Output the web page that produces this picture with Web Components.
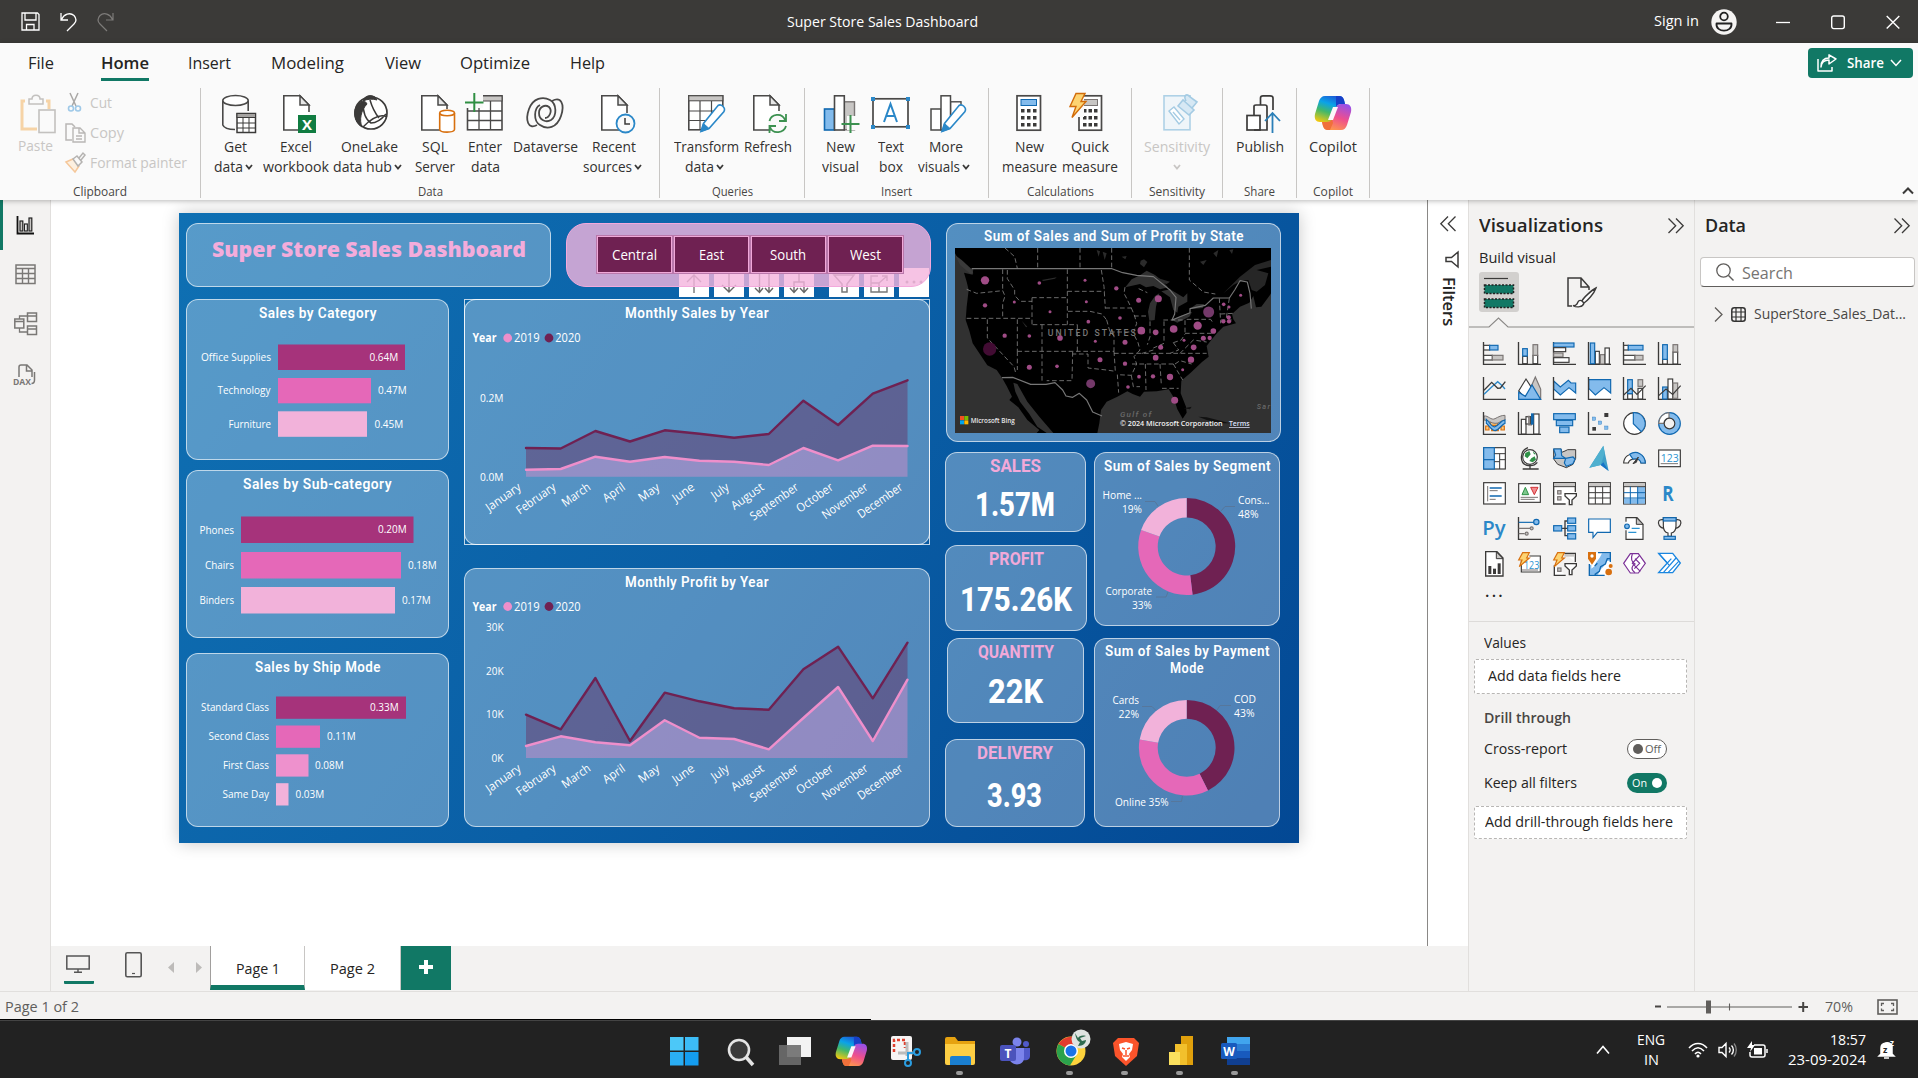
<!DOCTYPE html>
<html lang="en">
<head>
<meta charset="utf-8">
<title>Super Store Sales Dashboard</title>
<style>
html,body{margin:0;height:100%;overflow:hidden}
body{font-family:"Open Sans","Noto Sans",sans-serif;color:#252423;background:#fff}
</style>
</head>
<body>
<bi-app></bi-app>
<script>
const K='#3b3a39',BL='#83bbec',BS='#1068b0',GR='#c8c6c4',GS='#7a7574',GREEN='#117865';
const BASE='*{box-sizing:border-box}svg{display:block;overflow:visible;flex:none}';
function comp(name,css,html){
  customElements.define(name,class extends HTMLElement{
    connectedCallback(){
      if(this.shadowRoot)return;
      const t=document.createElement('template');
      t.innerHTML='<style>'+BASE+css+'</style>'+(typeof html==='function'?html(this):html);
      this.attachShadow({mode:'open'}).appendChild(t.content.cloneNode(true));
    }
  });
}
/* Text set to an exact width */
customElements.define('fit-text',class extends HTMLElement{
  connectedCallback(){
    if(this.shadowRoot)return;
    const w=+this.getAttribute('w');
    const s=this.attachShadow({mode:'open'});
    s.innerHTML='<style>:host{display:inline-block;white-space:nowrap;line-height:1.3;flex:none;width:'+w+'px;text-align:left}span{display:inline-block;transform-origin:0 50%}</style><span><slot></slot></span>';
    const sp=s.querySelector('span'),n=sp.getBoundingClientRect().width;
    if(n)sp.style.transform='scaleX('+(w/n)+')';
  }
});
const F=(t,w,st='')=>`<fit-text w="${w}" style="${st}">${t}</fit-text>`;
const T=(x1,x2,cy,s,size=11.5,ex='')=>`<text x="${x1}" y="${(cy-.4+size*.36).toFixed(1)}" font-size="${size}" textLength="${(x2-x1).toFixed(1)}" lengthAdjust="spacingAndGlyphs" ${ex}>${s}</text>`;
const R=(x,y,w,h,f='none',s='none',sw=1)=>`<rect x="${x}" y="${y}" width="${w}" height="${h}" fill="${f}" stroke="${s}" stroke-width="${sw}"/>`;
const P=(d,s=K,sw=1.5,f='none',ex='')=>`<path d="${d}" stroke="${s}" stroke-width="${sw}" fill="${f}" ${ex}/>`;
const C=(x,y,r,f='none',s='none',sw=1)=>`<circle cx="${x}" cy="${y}" r="${r}" fill="${f}" stroke="${s}" stroke-width="${sw}"/>`;
const S=(w,h,c,vb)=>`<svg width="${w}" height="${h}" viewBox="${vb||`0 0 ${w} ${h}`}">${c}</svg>`;
const copilot=(id)=>`<defs><linearGradient id="${id}a" x1=".6" y1="0" x2=".2" y2="1"><stop offset="0" stop-color="#1b5fd8"/><stop offset=".3" stop-color="#0aa3e8"/><stop offset=".6" stop-color="#42b86a"/><stop offset="1" stop-color="#f2c80f"/></linearGradient><linearGradient id="${id}b" x1=".7" y1="0" x2=".3" y2="1"><stop offset="0" stop-color="#9a50e6"/><stop offset=".5" stop-color="#ee4f8e"/><stop offset="1" stop-color="#ff9a4a"/></linearGradient></defs>
<path d="M11 1H25c3 0 4 1.500 5 4l1 4h-4c-3 0-4 2-5 5l-3 9c-1 3-2 4-5 4H6c-4 0-6-3-5-8L5 6c1-3 3-5 6-5z" fill="url(#${id}a)"/>
<path d="M22 1h3c3 0 4 1.500 5 4l1 4h-4c-3 0-4 1-5 3z" fill="#1740c8"/>
<path d="M27 35H14c-3 0-4-1.500-5-4l-1-4h5c3 0 4-1 5-4l4-10c1-3 2-4 5-4h5c4 0 6 3 5 8l-4 13c-1 3-3 5-6 5z" fill="url(#${id}b)"/>
<path d="M8 27h5c3 0 4-1 5-4l1 5-3 7h-2c-3 0-4-1.500-5-4z" fill="#f0703a"/>
<path d="M19 12h5l-5 13h-5z" fill="#fdf6fa"/>`;

/* ---------- title bar ---------- */
comp('title-bar',`:host{display:grid;grid-template-columns:1fr auto 1fr;align-items:center;height:43px;background:#3b3a38;color:#fff;font-size:14.5px}
.l{display:flex;gap:20px;padding-left:21px;align-items:center}.r{display:flex;justify-content:flex-end;align-items:center;padding-right:18px}`,
`<div class="l">${S(19,19,P('M1 1H16.500L18 2.500V18H1zM4 1V8H15V1M5.500 18V12.500H13V18','#fff',1.3))}
${S(17,19,P('M1 1V8H8M1.500 7.500C4 2 10 0 14 3.500C17 7 16 10 14 12L7 19','#fff',1.3))}
${S(17,19,P('M16 1V8H9M15.500 7.500C13 2 7 0 3 3.500C0 7 1 10 3 12L10 19','#7d7b79',1.2))}</div>
<div style="padding-right:154px">${F('Super Store Sales Dashboard',191)}</div>
<div class="r">${F('Sign in',45)}<span style="margin-left:12px">${S(26,26,C(13,13,12.7,'#f5f4f3')+C(13,7.5,3.8,'none','#222',1.8)+P('M5.500 14.500H20.500C21.500 24 4.500 24 5.500 14.500Z','#222',1.8,'none','stroke-linejoin="round"'))}</span>
<span style="margin-left:39px">${S(14,14,P('M0 7.500H14','#fff',1.3))}</span><span style="margin-left:41px">${S(14,14,'<rect x=".7" y="1" width="12.600" height="12.600" rx="2" fill="none" stroke="#fff" stroke-width="1.400"/>')}</span><span style="margin-left:41px">${S(14,14,P('M.7 1L13.300 13.600M13.300 1L.7 13.600','#fff',1.4))}</span></div>`);

/* ---------- ribbon ---------- */
comp('ribbon-tabs',`:host{display:flex;height:42px;align-items:flex-start;padding:5px 5px 0 28px;font-size:16px;color:#252423}
.t{height:33px;padding-top:4px}.on{font-weight:600;border-bottom:3px solid ${GREEN}}
.sh{margin-left:auto;height:30px;width:105px;background:${GREEN};border-radius:4px;display:flex;align-items:center;color:#fff;font-size:14.500px;font-weight:600;padding-left:9px;gap:6px}`,
()=>{let x=28,o='';for(const [n,a,b] of [['File',28,54],['Home',101,149],['Insert',188,231],['Modeling',271,344],['View',385,421],['Optimize',460,530],['Help',570,605]]){o+=`<div class="t ${n=='Home'?'on':''}" style="margin-left:${a-x}px">${F(n,b-a)}</div>`;x=b}
return o+`<div class="sh">${S(20,18,P('M1 5V17H15V13M4 13C4.500 8 8 6 12 6V10L19 5L12 .8V4C7 4 4 7 4 13Z','#fff',1.5,'none','stroke-linejoin="round"'))}${F('Share',37,'margin-left:4px')}${S(12,8,P('M1 1L6 6.500L11 1','#fff',1.5))}</div>`});

const docf=(x,y2=20)=>P(`M${x+20} 38H${x+.8}V3.800H${x+17}L${x+26} 13V${y2}`,'#4a4948',1.6,'#fff')+P(`M${x+17} 3.800V13H${x+26}Z`,'#4a4948',1.5,'#e6e6e6');
const pencil=(x,y)=>P(`M${x} ${y}L${x+2.5} ${y-8}L${x+17} ${y-26}C${x+20} ${y-28} ${x+25} ${y-24} ${x+23} ${y-20}L${x+8} ${y-3}Z`,'#2b88c8',1.6,'#fff')+P(`M${x} ${y}L${x+2.500} ${y-8}L${x+8} ${y-3}Z`,'#2b88c8',1,'#2b88c8');
const calc=(x,w,c,s)=>R(x,3.8,w,34.4,'#fff','#4a4948',1.7)+R(x+4,7.500,w-8,6,c,s,1)+[0,1,2].map(j=>[0,1,2].map(i=>R(x+4+i*(w-11.500)/2,17+j*7,3.5,3.5,K)).join('')).join('');
const bolt=(x,y,k=1)=>`<g transform="translate(${x} ${y}) scale(${k})">${P('M6 0H15L11 8H16L2 24L6 13H0Z','#d26c0a',1.4,'#fdd472')}</g>`;
const IC={
get:P('M7.800 9V33C9 36 14 37.500 20 37.500M33.200 9V19','#4a4948',1.6)+`<ellipse cx="20.500" cy="8.500" rx="12.700" ry="5" fill="#fff" stroke="#4a4948" stroke-width="1.600"/>`+R(22,21.500,18.500,19,'#fff','#3b3a39',1.5)+R(22,21.500,18.500,4,'#a5a3a1','#3b3a39',1)+P('M28 25V40M34 25V40M22 31H40M22 36H40','#3b3a39',1),
excel:docf(7)+R(22,23,18,18,'#107c41')+`<text x="31" y="37.500" font-size="15" font-weight="700" fill="#fff" text-anchor="middle" textLength="9">X</text>`,
lake:C(22,21,16,'#fff','#3b3a39',1.7)+P('M9 12C4 17 4 30 13 35C10 28 12 18 18 12C16 8 13 8 9 12Z',K,1,K)+P('M14 9C16 2 26 2 28 8C24 6.500 18 7 14 9Z',K,1,K)+P('M14 10C14 20 17 28 22 31C26 31 32 28 37 22M21 8C23 15 26 21 30 26M14 35C24 25 32 22 38 25',K,1.500),
sql:docf(6,17)+P('M24.700 21V37.500C25 41 39 41 39.500 37.500V21','#d8700f',1.6,'#fff')+`<ellipse cx="32.100" cy="21" rx="7.400" ry="2.800" fill="#fff" stroke="#d8700f" stroke-width="1.600"/>`,
enter:R(2.5,3.800,34.500,34,'#fff','#4a4948',1.6)+R(14,4,23,5,GR,'#4a4948',1)+P('M14 9V38M25.500 9V38M2.500 19H37M2.500 28.500H37','#4a4948',1.300)+R(0,2,18,14,'#fafafa')+P('M0 10.500H18.500M9.300 1V20','#2f8f43',2),
dv:P('M12 33C3 38 0 28 4 17C8 6 18 4 25 8C32 12 32 24 26 28C21 31 14 28 14 21C14 15 20 12 24 15C28 19 24 26 20 26','#4a4948',1.800)+P('M27 9C36 4 40 12 36 24C32 36 22 38 15 33C8 29 9 16 15 13','#4a4948',1.800),
recent:docf(7,21)+C(31.500,31.500,9,'#fafafa','#2b88c8',1.800)+P('M31 26V32H36',K,1.500),
trans:R(2.800,3.800,34,34,'#fff','#4a4948',1.600)+R(2.800,3.800,34,5,GR,'#4a4948',1)+P('M14 9V38M25.500 9V38M3 19H37M3 28.500H37','#4a4948',1.200)+P('M16 40L39 14V42H16Z','none',0,'#fafafa')+pencil(15,39.500),
refresh:docf(5,19)+C(29.700,31.500,10,'#fafafa')+P('M21.500 29C23 22 34 20 37 28M38 22V29H31M38 34C36 41 25 43 22 35M21.500 41V34H28','#3c9150',1.800),
nv:R(4.500,17,10,21,BL,BS,1.600)+R(24,9.800,10.500,28,GR,GS,1.400)+R(14.500,3.800,9.800,34.200,'#fff','#4a4948',1.600)+P('M27 24H38V38H27Z','none',0,'#fafafa')+P('M21.500 32H39.500M30.500 23V41','#3c9150',2),
tb:R(2,6.800,35,28,'#fff','#4a4948',1.700)+[[0,5],[35,5],[0,33],[35,33]].map(p=>R(p[0],p[1],4,4,'#2b88c8')).join('')+P('M13 30L19.500 12L26 30M15.500 24H23.500','#2b88c8',2),
mv:R(5,17,10,21,'#fff','#4a4948',1.500)+R(24.500,9.800,10.500,28,'#fff','#4a4948',1.400)+R(15,3.800,9.500,34.200,'#fff','#4a4948',1.500)+P('M17 41L38 14V40H16Z','none',0,'#fafafa')+pencil(16,39.500),
calc:calc(8,23.500,'#83bbec','#1068b0'),
quick:calc(9,22.500,GR,GS)+R(5,3,9,22,'#fafafa')+bolt(0,1.500),
sens:R(7,3.800,26,34,'#eff5f9','#aed1e6',1.600)+P('M12 19L17 15L27 27L22 32Z','#a4cbe3',1.400,'#fff')+P('M16 20L23 28','#a4cbe3',1.400)+P('M21 14L26 8L37 18L32 23ZM29 9C26 3 30 1 33 5L40 10L35 16','#a4cbe3',1.600,'#d6e8f4'),
pub:R(7,23.500,13,14.500,'#fff',K,1.700)+P('M14 23V14.500Q14 13 16 13H25Q27 13 27 15V38H14','#3b3a39',1.700)+P('M20.500 13V6Q20.500 3.800 23 3.800H30Q33 3.800 33 6V18',K,1.700)+R(28,22,10,19,'#fafafa')+P('M32.500 41V21M25 29L32.500 21L40 29','#2b7fb8',1.800),
cop:`<g transform="translate(1 3)">${copilot('r')}</g>`};
const chev=(c=K)=>S(8,6,P('M1 1L4 4.500L7 1',c,1.800));
comp('ribbon-item',`:host{display:flex;flex-direction:column;align-items:center;padding-top:4px;color:#323130;font-size:14px;flex:none}
.l{display:flex;align-items:center;gap:2px;height:20px}.i{height:42px;margin-bottom:3px}`,
e=>{const dis=e.hasAttribute('disabled');e.style.width=e.getAttribute('w')+'px';
return `<div class="i">${S(40,42,IC[e.getAttribute('icon')])}</div>`+e.getAttribute('lines').split('|').map(l=>{const [t,w]=l.split(':');return `<div class="l" style="${dis?'color:#c8c6c4':''}">${t=='v'?chev('#c8c6c4'):t.endsWith('^')?F(t.slice(0,-1),w)+chev()+'<span style="width:2px"></span>':F(t,w)}</div>`}).join('')});
comp('ribbon-group',`:host{display:flex;flex-direction:column;height:110px;border-right:1px solid #c8c6c4;flex:none;font-size:12px;color:#484644}
.b{display:flex;flex:1}.f{display:flex;justify-content:center;height:14px}`,
e=>{e.style.width=e.getAttribute('w')+'px';return `<div class="b" style="padding-left:${e.getAttribute('pad')||0}px"><slot></slot></div><div class="f">${F(e.getAttribute('label'),e.getAttribute('lw'))}</div>`});
comp('clip-tools',`:host{display:flex;flex:1;color:#c8c6c4;font-size:14px;padding-left:18px}
.p{display:flex;flex-direction:column;align-items:center;width:34px;padding-top:7px}.c{padding:0 0 0 13px}.r{height:30px;display:flex;align-items:center}.r span{width:25px;display:flex}`,
`<div class="p"><div style="margin-left:5px">${S(36,39,P('M5 6H2V34H17M26 6H29V14','#f6d3a6',3)+P('M9 9V4H12C12 -1 20 -1 20 4H23V9Z','#c3c1bf',1.500,'#fafafa')+R(19,15,16,22.500,'#fafafa','#c3c1bf',1.600))}</div><div style="margin-top:2px">${F('Paste',35)}</div></div>
<div class="c"><div class="r"><span>${S(16,20,P('M5 0L11 13M13 0L7 13','#a9a7a5',1.500)+C(6,15.500,2.500,'none','#9fc9e8',1.600)+C(13,15.500,2.500,'none','#9fc9e8',1.600))}</span>${F('Cut',22)}</div>
<div class="r"><span>${S(21,20,P('M7 17H1V1H7L10 4','#b9b7b5',1.500)+P('M8 5H15L20 10V19H8ZM14 5V10H20M11 13H17M11 16H17','#b9b7b5',1.400,'#fafafa'))}</span>${F('Copy',34)}</div>
<div class="r"><span>${S(21,20,P('M1 9L8 6L14 13L10 19Z','#f5c79a',1.500,'#fdf0e0')+P('M8 6L12 3L17 9L13 13ZM14 5L18 0L20 2L16 7','#b5b3b1',1.500,'#fafafa'))}</span>${F('Format painter',97)}</div></div>`);
const ri=(i,w,l,x='')=>`<ribbon-item icon="${i}" w="${w}" lines="${l}" ${x}></ribbon-item>`;
comp('ribbon-bar',`:host{display:block;height:157px;background:#fafafa;box-shadow:0 1px 5px rgba(0,0,0,.28);z-index:5;position:relative;flex:none}
.g{display:flex;padding-top:3px}.x{margin-left:auto;padding:99px 4px 0 0}`,
`<ribbon-tabs></ribbon-tabs><div class="g">
<ribbon-group w="201" label="Clipboard" lw="54"><clip-tools></clip-tools></ribbon-group>
<ribbon-group w="459" pad="4" label="Data" lw="25">${ri('get',60,'Get:23|data^:29')+ri('excel',62,'Excel:32|workbook:66')+ri('lake',84,'OneLake:57|data hub^:59')+ri('sql',48,'SQL:26|Server:40')+ri('enter',52,'Enter:34|data:29')+ri('dv',68,'Dataverse:65')+ri('recent',70,'Recent:44|sources^:49')}</ribbon-group>
<ribbon-group w="145" pad="10" label="Queries" lw="41">${ri('trans',72,'Transform:65|data^:29')+ri('refresh',52,'Refresh:48')}</ribbon-group>
<ribbon-group w="184" pad="10" label="Insert" lw="31">${ri('nv',50,'New:29|visual:37')+ri('tb',52,'Text:26|box:24')+ri('mv',58,'More:34|visuals^:42')}</ribbon-group>
<ribbon-group w="143" pad="11" label="Calculations" lw="67">${ri('calc',58,'New:29|measure:55')+ri('quick',64,'Quick:38|measure:56')}</ribbon-group>
<ribbon-group w="91" label="Sensitivity" lw="56">${ri('sens',90,'Sensitivity:66|v:0','disabled')}</ribbon-group>
<ribbon-group w="74" label="Share" lw="31">${ri('pub',73,'Publish:48')}</ribbon-group>
<ribbon-group w="73" label="Copilot" lw="40">${ri('cop',72,'Copilot:48')}</ribbon-group>
<div class="x">${S(12,8,P('M1 6.500L6 1.500L11 6.500',K,2))}</div></div>`);

/* ---------- left rail ---------- */
comp('nav-rail',`:host{display:flex;flex-direction:column;width:51px;background:#f3f2f1;border-right:1px solid #e1dfdd;flex:none}
div{height:49px;display:flex;align-items:center;padding-left:14px}.on{height:50px;border-left:3px solid ${GREEN};padding-left:13px}`,
`<div class="on">${S(19,19,P('M1.500 0V17.500H18',"#111",1.800)+R(4,5,2.800,10,'#c8c6c4','#222',1.200)+R(8.500,8,2.800,7,'#fff','#222',1.200)+R(13,2,2.800,13,'#c8c6c4','#222',1.200))}</div>
<div>${S(22,21,R(2,1,19,18.500,'none','#7a7876',1.500)+P('M2 4.500H21M2 9.500H21M2 14.500H21M8.500 4.500V20M14.500 4.500V20','#7a7876',1.400))}</div>
<div>${S(23,24,R(.8,7,9,9,'none','#7a7876',1.500)+R(13.500,1,9,8.500,'none','#7a7876',1.500)+R(13.500,14,9,8.500,'none','#7a7876',1.500)+P('M5.500 7V4H13.500M5.500 16V20H13.500M.8 9.500H10M13.500 4H22.500M13.500 17H22.500','#7a7876',1.300))}</div>
<div style="height:54px">${S(22,22,P('M5 13V3Q5 1 7 1H13L18 6V13M12.500 1V7H18M20.500 8V16Q20.500 19.500 17.500 19.500','#7a7876',1.500)+`<text x="-1" y="21" font-size="9" font-weight="700" fill="#7a7876" textLength="18" lengthAdjust="spacingAndGlyphs">DAX</text>`)}</div>`);

/* ---------- report visuals ---------- */
const W='fill="#fff"';
comp('visual-card',`:host{display:block;flex:none;background:rgba(255,255,255,.3);border:1px solid rgba(255,255,255,.62);border-radius:12px;color:#fff;position:relative}
header{display:flex;flex-direction:column;align-items:center;justify-content:center;font:600 14.200px/17px Roboto,sans-serif;letter-spacing:.5px;padding-top:1px}
svg{font-family:"Open Sans",sans-serif}`,
e=>{const a=n=>e.getAttribute(n);e.style.width=a('w')+'px';e.style.height=a('h')+'px';
const ls=a('head')?a('head').split('|'):[];
return (ls.length?`<header style="height:${a('hh')||25}px;${a('hh')=='43'?'padding:0 0 2px':''}">${ls.map(l=>{const [t,w]=l.split(':');return F(t,w,'line-height:17px')}).join('')}</header>`:'')+'<slot></slot>'});
comp('bar-visual',`:host{display:block}svg{font-family:"Open Sans",sans-serif}`,e=>{
const D={cat:['187 325 261 134',278,[['Office Supplies',201,271,344.500,25.500,405,'#a6337b','0.64M',369.500],['Technology',217.500,270.500,378,25.300,371,'#e568b8','0.47M',378],['Furniture',228.500,271,411.300,25.500,367,'#f2b2da','0.45M',374.500]]],
sub:['187 496 261 141',241,[['Phones',199.500,234,516.500,26.500,413.500,'#a6337b','0.20M',378],['Chairs',205,234,552,26.500,401,'#e568b8','0.18M',408],['Binders',199.500,234,587,26.500,395,'#f2b2da','0.17M',402]]],
ship:['187 679 261 147',276,[['Standard Class',201,269,696.500,22.300,406,'#a6337b','0.33M',370],['Second Class',208.500,269,725.500,22.300,320,'#e568b8','0.11M',327],['First Class',223,269,754.300,22.300,308.500,'#ee91cd','0.08M',315],['Same Day',222.500,269,783.200,22.300,288.500,'#f2b2da','0.03M',295.500]]]}[e.getAttribute('data')];
const [,,w,h]=D[0].split(' ');
return S(w,h,D[2].map(b=>R(D[1],b[3],b[5]-D[1],b[4],b[6])+T(b[1],b[2],b[3]+b[4]/2,b[0],11.5,W)+T(b[8],b[8]+28.700,b[3]+b[4]/2-.2,b[7],11.5,W)).join(''),D[0])});
const MON=[['January',40],['February',45],['March',32],['April',24],['May',23],['June',24],['July',19],['August',37],['September',56],['October',42],['November',53],['December',52]];
comp('area-visual',`:host{display:block}svg{font-family:"Open Sans",sans-serif}`,e=>{
const D={sales:['465 325 464 219',476.700,338.500,[['0.2M',480,503.500,398],['0.0M',480,503.500,477]],[448,448.500,431,441.500,430.300,433.700,437.700,434,400.700,425,393.700,380.300],[469.700,469,456.700,461.700,457,460.700,461.700,465,448,460.300,445.700,446]],
profit:['465 594 464 232',758,607,[['30K',486,503.500,627],['20K',486,503.500,671],['10K',486,503.500,714.300],['0K',491.500,503.500,758.300]],[714.700,729.300,678,741,692.700,701.300,708.300,709.700,669.300,646.700,698.300,642.700],[746,736.300,742.300,745.300,720.300,737.700,739,749.300,718,687,741,679.700]]}[e.getAttribute('data')];
const X=i=>(526+i*34.68).toFixed(1),pt=a=>a.map((y,i)=>X(i)+' '+y).join('L'),back=a=>a.map((y,i)=>X(i)+' '+y).reverse().join('L');
const [,,w,h]=D[0].split(' '),ly=D[2];
return S(w,h,T(472.500,496.500,ly,'Year',12,W+' font-weight="700"')+C(507.700,ly-.5,4.400,'#ee8fcb')+T(514,539.700,ly,'2019',12,W)+C(549,ly-.5,4.400,'#6f2152')+T(555.300,580.500,ly,'2020',12,W)
+D[3].map(l=>T(l[1],l[2],l[3],l[0],11.5,W)).join('')
+P(`M${pt(D[4])}L${back(D[5])}Z`,'none',0,'rgba(111,33,82,.4)')+P(`M${pt(D[5])}L${X(11)} ${D[1]}L526 ${D[1]}Z`,'none',0,'rgba(240,139,203,.4)')
+P('M'+pt(D[4]),'#6f2152',2.400,'none','stroke-linejoin="round" stroke-linecap="round"')+P('M'+pt(D[5]),'#ee8fcb',2.400,'none','stroke-linejoin="round" stroke-linecap="round"')
+MON.map((m,i)=>`<text transform="translate(${(+X(i)-4).toFixed(1)} ${D[1]+12.300}) rotate(-35)" x="${-m[1]}" y="0" font-size="12" textLength="${m[1]}" lengthAdjust="spacingAndGlyphs" fill="#fff">${m[0]}</text>`).join(''),D[0])});
comp('donut-visual',`:host{display:block}svg{font-family:"Open Sans",sans-serif}`,e=>{
const seg=e.getAttribute('data')=='seg',cx=1186.700,cy=seg?546.500:747.700,Ro=seg?48.500:47.800,Ri=29;
const q=(r,a)=>{a=a*Math.PI/180;return (cx+r*Math.sin(a)).toFixed(2)+' '+(cy-r*Math.cos(a)).toFixed(2)};
const arc=(a,b,f)=>P(`M${q(Ro,a)}A${Ro} ${Ro} 0 ${b-a>180?1:0} 1 ${q(Ro,b)}L${q(Ri,b)}A${Ri} ${Ri} 0 ${b-a>180?1:0} 0 ${q(Ri,a)}Z`,'none',0,f);
const [a,b]=seg?[173,290]:[153.500,280];
const lab=seg?T(1102.500,1142,495,'Home ...',11.5,W)+T(1122,1142,509.500,'19%',11.5,W)+T(1238,1269.500,500.500,'Cons...',11.5,W)+T(1238,1258.500,514.500,'48%',11.5,W)+T(1105.500,1152,591.500,'Corporate',11.5,W)+T(1132,1152,605.500,'33%',11.5,W)+P('M1145 501.500H1155L1158 506M1235 506.500H1225L1221 511M1156 597H1166L1168 592','#56779c',1)
:T(1112.500,1139,700.500,'Cards',11.5,W)+T(1118.500,1139,714.500,'22%',11.5,W)+T(1234,1256,699.500,'COD',11.5,W)+T(1234,1254.500,713.500,'43%',11.5,W)+T(1115,1168.500,802.300,'Online 35%',11.5,W)+P('M1142 706.500H1152L1156 710.500M1231 705.500H1220L1217 710M1171 801.500H1181.500L1182.500 796','#56779c',1);
return S(184,seg?147:144,arc(0,a,'#6f2152')+arc(a,b,'#e568b8')+arc(b,360,'#f2b2da')+lab,seg?'1095 478 184 147':'1095 682 184 144')});
comp('kpi-card',`:host{display:flex;flex-direction:column;align-items:center;flex:none;background:rgba(255,255,255,.3);border:1px solid rgba(255,255,255,.62);border-radius:12px;font-family:Roboto,sans-serif;color:#fff}
.a{color:#f2a9d9;font-weight:700;font-size:17.500px;height:26px;display:flex;align-items:center}.b{font-weight:800;font-size:33px;flex:1;display:flex;align-items:center;margin-left:-1px}`,
e=>{const a=n=>e.getAttribute(n);return `<div class="a">${F(a('label'),a('lw'))}</div><div class="b" style="padding-bottom:${a('pb')||0}px">${F(a('value'),a('vw'),'line-height:1')}</div>`});
comp('slicer-tiles',`:host{display:flex;justify-content:center;gap:2px;width:365px;height:64px;padding:12px 0 0 2px;background:rgba(244,180,221,.8);border:1.500px solid #f3a9dc;border-radius:20px;position:relative;z-index:3;font-size:14px;color:#fff}
div{width:75px;height:37px;background:#6f2152;border:1px solid #f0a8d8;outline:1px solid #b978ab;outline-offset:0;display:flex;align-items:center;justify-content:center;padding-top:1px}`,
`<div>${F('Central',45)}</div><div>${F('East',25)}</div><div>${F('South',36)}</div><div>${F('West',31)}</div>`);
const hb=c=>S(30,29,R(0,0,30,29,'#fff')+c);
comp('visual-tools',`:host{display:flex;position:absolute;right:1px;top:-31px;z-index:1;gap:5px}`,
[P('M15 25V7M8 14L15 7L22 14','#777',1.400),P('M15 6V24M8 17L15 24L22 17','#666',1.400),P('M10.500 6V24M6 20L10.500 24.500L14 20M20 6V24M16 20L20 24.500L24 20','#666',1.400),P('M15 6V14M10 24V14H20V24M6 20L10 24.500L14 20M16 20L20 24.500L24 20','#666',1.400)].map(hb).join('')+'<span style="width:5px"></span>'+
[P('M5 7H25L18 16V24H13V16Z','#777',1.500),P('M7 14V24H23V18M7 14V8H14M7 15H15V24M15 15L23 8M18 8H23V13','#777',1.400),C(8,14,1.500,'#888')+C(15,14,1.500,'#888')+C(22,14,1.500,'#888')].map(hb).join(''));

/* Map geometry is in a 948x555 space, three units to the pixel */
comp('map-visual',`:host{display:block;padding:0 9px 0 8px}svg{overflow:hidden}`,()=>{
const sea='#313131',dots=[[135,211,13],[135,286,7],[223,276,5],[298,219,6],[330,305,5],[194,377,7],[268,378,6],[268,472,8],[351,469,6],[360,384,9],[435,211,5],[439,275,5],[445,335,6],[466,394,5],[480,449,8],[452,521,14],[529,235,7],[540,324,6],[555,397,8],[555,461,7],[564,531,6],[596,271,8],[655,266,11],[604,362,12],[647,367,9],[701,357,12],[662,412,8],[647,443,9],[597,500,6],[639,499,7],[690,501,10],[704,571,11],[728,479,5],[753,449,10],[761,412,9],[732,391,5],[773,347,13],[806,306,17],[820,363,9],[790,385,8],[809,384,7],[850,334,7],[866,322,7],[867,334,7],[851,283,6],[867,291,5],[902,256,5]];
return S(316,185,R(45,114,948,555,'#000')
+P('M45 130L62 158L85 178L100 176L98 194L72 188L80 215L86 240L80 290L77 330L88 362L98 400L125 440L142 466L170 480L186 503L200 528L216 560L208 570L235 592L262 630L298 660L290 669H45Z','none',0,sea)
+P('M220 518L232 522L262 575L298 620L340 669H320L292 650L268 612L240 575L226 545Z','none',0,sea)
+P('M483 600L500 575L532 560L562 544L578 552L600 560L612 545L650 544L686 538L700 560L712 598L728 626L740 608L738 590L722 550L724 512L752 488L786 456L806 440L800 408L812 392L832 368L850 350L888 340L880 328L876 312L900 290L928 278L940 258L948 292L964 290L990 255L993 250V669H472L478 640Z','none',0,sea)
+P('M850 250L900 200L945 165L993 150V170L950 180L985 190L975 225L950 245L935 240L925 210L905 212L880 225Z','none',0,'#262626')
+P('M45 135L65 150L92 175L100 190L92 192L60 165Z','none',0,'#3a3a3a')
+P('M556 232L575 208L600 196L620 182L645 195L664 210L684 232L660 238L640 228L618 232L600 222Z','none',0,sea)+P('M630 280L645 258L658 250L648 290L644 330L628 332L624 305Z','none',0,sea)+P('M664 244L690 238L730 262L742 250L742 275L715 290L712 308L700 300L690 262Z','none',0,sea)+P('M696 330L720 318L756 306L748 320L712 338Z','none',0,sea)+P('M748 298L770 282L792 282L788 294Z','none',0,sea)
+P('M602 152L612 148L622 156L612 172L600 162ZM470 120L480 124L476 140ZM488 125L500 130L494 150ZM545 140L560 138L556 148ZM640 200L690 215L680 222L650 214ZM780 155L800 150L790 165ZM820 130L835 120L830 142ZM868 120L880 118L876 132ZM245 332L262 350L258 352ZM305 210L350 202L345 206L310 213Z','none',0,'#2b2b2b')
+P('M730 595L755 590L750 598ZM775 620L800 622L870 640L840 640L800 630Z','none',0,'#111')
+P('M95 176H516L548 188L590 196L640 200L690 240L708 262L704 312L696 330L750 308L750 296L796 286L820 264H868L884 240L900 212L922 216L930 250L934 296','#777',3.400,'none','stroke-linejoin="round"')
+P('M186 503L218 502L272 523H318L345 518L368 540L378 558L398 562L418 550L440 570L458 606L486 618','#777',3.600,'none','stroke-linejoin="round"')
+P('M188 178V240M80 238L110 250L188 242L195 258L188 280V325M80 325H276M142 328V384L222 470L228 492M232 328V424M232 424H522M306 344V514M202 180V206L224 240V256L240 274H276M276 263V344M276 263H382M382 178V344M278 344H412M382 244H494M384 304H450L486 312L500 330M412 344V424M484 180L492 230L496 296M496 294H574L560 265L552 250L556 225M500 330L510 366L522 378V424M522 424L526 484L500 480L444 474V432H398M398 426L396 512H320M232 424V480M510 366H575M574 294L584 318L590 340L580 370L594 398L600 420L582 440L590 462L574 496L532 494L536 548M522 430H590M574 496L580 530H600M582 318H626M630 334V380L622 404M590 430H800M576 462H705M672 334V400L640 414M670 330H735V370M735 370H815M700 398L724 390L735 372M740 328H812L820 340M616 462L618 540M660 462L664 525M666 535H716M700 462L728 510M705 462L720 452L755 462M640 420L600 432M700 398L716 420L690 430M720 430L760 390L800 396M596 236L622 248M838 265L842 340M868 265L858 330M842 312L880 310M842 330L875 330M293 114V175M420 114V175M515 114V178M195 114L224 140L232 175M748 114V210L790 246L826 252','#858585',2.400,'none','stroke-dasharray="14 8"')
+`<text x="323" y="377" font-family="Roboto,sans-serif" font-size="26" font-weight="500" fill="#777" textLength="264">UNITED STATES</text><text x="540" y="620" font-family="Roboto,sans-serif" font-style="italic" font-size="24" font-weight="500" fill="#6a6a6a" textLength="94">Gulf of</text><text x="950" y="597" font-family="Roboto,sans-serif" font-style="italic" font-size="22" font-weight="500" fill="#6a6a6a" textLength="40">Sar</text><text x="364" y="683" font-family="Roboto,sans-serif" font-size="24" font-weight="500" fill="#777" textLength="98">MEXICO</text>`
+dots.map(d=>C(d[0],d[1],d[2]-.5,d[2]>13?'#74396a':'#a04c86')).join('')+C(149,417,20,'#420c33')
+R(60,618,12,12,'#f25022')+R(73,618,12,12,'#7fba00')+R(60,631,12,12,'#00a4ef')+R(73,631,12,12,'#ffb900')
+`<text x="92" y="639" font-family="Open Sans,sans-serif" font-size="22" font-weight="600" fill="#e8e8e8" textLength="132" lengthAdjust="spacingAndGlyphs">Microsoft Bing</text><text x="540" y="648" font-family="Open Sans,sans-serif" font-size="23" font-weight="600" fill="#f2f2f2" textLength="308" lengthAdjust="spacingAndGlyphs">© 2024 Microsoft Corporation</text><text x="867" y="648" font-family="Open Sans,sans-serif" font-size="23" font-weight="600" fill="#dfe4ff" textLength="62" lengthAdjust="spacingAndGlyphs" text-decoration="underline">Terms</text>`,'45 114 948 555')});

comp('report-page',`:host{display:flex;gap:14px;width:1120px;height:630px;padding:10px 0 0 7px;background:linear-gradient(125deg,#0f70b3 0%,#0a5fa6 50%,#034894 100%);box-shadow:0 0 16px rgba(0,0,0,.22)}
.left{display:flex;flex-direction:column;gap:12px;width:745px;flex:none}.row{display:flex}.col{display:flex;flex-direction:column}
.title{display:flex;align-items:center;padding-left:25px;height:50px;font-weight:800;font-size:21.500px;color:#f4acdb}
.sel{outline:1px solid rgba(255,255,255,.75);outline-offset:-1px;width:466px;height:246px;position:relative}`,
`<div class="left"><div class="row" style="gap:15px"><visual-card w="365" h="64"><div class="title">${F('Super Store Sales Dashboard',314)}</div></visual-card><slicer-tiles></slicer-tiles></div>
<div class="row" style="gap:15px"><div class="col">
<visual-card w="263" h="161" head="Sales by Category:118"><bar-visual data="cat"></bar-visual></visual-card>
<visual-card style="margin-top:10px" w="263" h="168" head="Sales by Sub-category:149"><bar-visual data="sub"></bar-visual></visual-card>
<visual-card style="margin-top:15px" w="263" h="174" head="Sales by Ship Mode:126"><bar-visual data="ship"></bar-visual></visual-card></div>
<div class="col" style="gap:23px"><div class="sel"><visual-tools></visual-tools><visual-card w="466" h="246" head="Monthly Sales by Year:144"><area-visual data="sales"></area-visual></visual-card></div>
<visual-card w="466" h="259" head="Monthly Profit by Year:144"><area-visual data="profit"></area-visual></visual-card></div></div></div>
<div class="col" style="gap:10px"><visual-card style="margin-left:1px" w="335" h="219" hh="24" head="Sum of Sales and Sum of Profit by State:260"><map-visual></map-visual></visual-card>
<div class="row" style="gap:7px"><div class="col" style="width:142px">
<kpi-card style="width:141px;height:80px" label="SALES" lw="51" value="1.57M" vw="80" pb="2"></kpi-card>
<kpi-card style="width:142px;height:86px;margin-top:13px" label="PROFIT" lw="55" value="175.26K" vw="112" pb="3"></kpi-card>
<kpi-card style="width:137px;height:85px;margin:7px 0 0 2px" label="QUANTITY" lw="76" value="22K" vw="55" pb="4"></kpi-card>
<kpi-card style="width:140px;height:88px;margin-top:16px" label="DELIVERY" lw="76" value="3.93" vw="55" pb="2"></kpi-card></div>
<div class="col" style="gap:12px"><visual-card w="186" h="174" head="Sum of Sales by Segment:167"><donut-visual data="seg"></donut-visual></visual-card>
<visual-card w="186" h="189" hh="43" head="Sum of Sales by Payment:165|Mode:34"><donut-visual data="pay"></donut-visual></visual-card></div></div></div>`);

/* ---------- side panes ---------- */
const dbl=(l)=>S(16,16,l?P('M8 .500L.8 7.700L8 15M15.500 .500L8.300 7.700L15.500 15',K,1.300):P('M.5 .500L7.700 7.700L.5 15M8 .500L15.200 7.700L8 15',K,1.300));
comp('filters-pane',`:host{display:flex;flex-direction:column;align-items:center;width:41px;border-left:1px solid #8a8886;background:#fff;padding:16px 0 0 0;flex:none}
.t{writing-mode:vertical-rl;font-size:16.500px;font-weight:600;height:54px;line-height:20px;margin:9px 0 0 2px}`,
`${dbl(1)}<div style="margin:19px 0 0 8px">${S(14,17,P('M13 1V16L6.500 10.500H1V6.500H6.500Z',K,1.500))}</div><div class="t">Filters</div>`);

const ax=P('M1.500 0V67H69',K,4),b=(x,y,w,h)=>R(x,y,w,h,BL,BS,3.5),g=(x,y,w,h)=>R(x,y,w,h,GR,GS,3.5),w_=(x,y,w,h)=>R(x,y,w,h,'#fff',K,3.5);
const tx=(x,y,s,sz,l,f='#2b93d1',wt=400)=>`<text x="${x}" y="${y}" font-size="${sz}" font-weight="${wt}" fill="${f}" textLength="${l}" lengthAdjust="spacingAndGlyphs">${s}</text>`;
const fun='M36 35H70V42L57 54V68H49V54L36 42Z',zb='M14 2H34L26 18H34L4 44L12 24H2Z';
const V=[
ax+w_(2,10,18,14)+b(20,10,25,14)+w_(2,40,26,14)+g(28,40,32,14),
ax+w_(14,43,14,22)+b(14,20,14,22)+w_(45,40,14,25)+g(45,8,14,32),
ax+b(2,3,61,12)+w_(2,17,36,12)+g(2,33,28,12)+w_(2,47,46,14),
ax+w_(22,28,12,38)+g(37,38,14,28)+w_(51,18,13,48)+b(7,3,13,62),
ax+w_(2,10,14,14)+b(16,10,44,14)+w_(2,40,34,14)+g(36,40,24,14),
ax+w_(14,52,14,14)+b(14,8,14,44)+w_(45,30,14,36)+g(45,8,14,22),
ax+P('M3 52L26 30L44 14L56 25L66 36','#2b88c8',4)+P('M3 40L26 16L44 34L52 33L67 14',K,4),
P('M32 46L52 0L68 36V67H40Z',GS,3.5,GR)+P('M2 42L24 6L46 40L18 60Z',K,3.500,'#fff')+P('M2 46L22 58L42 24L68 67H2Z',BS,3.500,BL),
P('M2 34L20 52L48 32L68 50V66H2Z','none',0,'#fff')+P('M2 12L22 30L46 10L54 18H68V48L48 32L22 54L2 36Z',BS,3.500,BL)+ax,
P('M2 32L22 54L48 32L68 50V66H2Z','none',0,'#fff')+P('M2 8H68V48L48 32L22 54L2 34Z',BS,3.500,BL)+ax,
ax+w_(14,50,14,16)+b(14,8,14,42)+w_(45,34,14,32)+g(45,8,14,20)+P('M2 54L24 34L42 52L68 26',K,3.500),
ax+b(14,30,14,36)+w_(30,6,14,60)+g(45,18,14,46)+P('M2 56L24 36L44 52L68 26',K,3.500),
P('M8 42H18V54H8ZM26 46H46V56H26ZM54 42H64V54H54ZM22 30H44V40H22Z','#d8700f',3.5,'#fdc47a')+P('M3 12C16 10 24 26 36 20C48 14 54 10 66 10V24C54 24 48 36 36 34C24 34 16 24 3 24Z',GS,3,GR)+P('M10 22C20 30 26 48 36 44C48 40 52 26 66 24V34C56 36 50 54 36 56C24 54 18 40 10 34Z',BS,3.500,BL)+ax,
ax+w_(10,22,14,44)+w_(24,14,14,22)+w_(47,6,16,60)+P('M29 14H33V38H42','#7a7574',5)+R(39,4,8,34,BS),
b(2,5,65,18)+b(10,25,49,16)+b(20,45,28,17),
ax+R(49,3,12,12,K)+R(13,15,10,10,BL,BS,1)+R(31,27,10,10,BL,BS,1)+R(50,42,10,10,BL,BS,1)+R(13,45,11,11,K),
C(34.500,34.500,32.500,'#fff',K,3.500)+P('M31 2A32.500 32.500 0 0 1 55 59L31 35Z',BS,3.500,BL),
C(34.500,34.500,32.500,BL,BS,3.500)+P('M33 2A32.500 32.500 0 0 0 2 34H18A16 16 0 0 1 33 18Z',GS,3.500,'#fff')+C(34.500,34.500,16,'#f3f2f1',K,3.500),
w_(2,2,65,64)+b(2,2,32,36)+b(2,38,32,28)+P('M34 20H67M50 20V66M34 44H50M50 38H67',K,3),
P('M30 2C6 10 4 46 24 54C38 58 50 56 58 46',K,4)+C(36,30,22,'#fff',K,3.500)+P('M22 18L34 12L38 22L28 34L20 28ZM40 34L50 28L54 38L44 46L34 42ZM44 12L54 22H48Z','none',0,'#2f9147')+P('M36 54V65M14 66H62',K,4),
P('M2 6H24L26 16L36 12L44 8H68V34L60 52L40 62L14 52L2 36Z',K,3,GR)+P('M2 6H24L26 26L38 34H2L8 24Z',BS,3.500,BL)+P('M38 34L60 30L66 36L60 50L40 58L34 48Z',BS,3.500,BL),
P('M46 -4L62 72L38 54L4 62Z','none',0,'#3f9fc8')+P('M38 54L46 46L62 72Z','none',0,'#1673c8')+P('M46 -4L50 18L38 54L4 62Z','none',0,'#4fb0cf'),
P('M2 48C4 10 64 10 67 48H54C52 32 20 32 16 48Z',K,3.500,'#fff')+P('M20 22C40 8 66 22 67 48H54C52 38 42 34 30 36Z',BS,3.500,BL)+P('M30 50L46 30L40 46Z',K,3,K),
w_(2,9,65,50)+tx(8,44,'123',34,54)+P('M8 50H60',GS,3),
w_(2,2,65,64)+P('M14 12V58',GS,3)+P('M20 18H56M20 42H56','#1068b0',5)+P('M20 26H44M20 52H38',GS,3),
w_(2,5,65,56)+P('M12 38L22 16L32 38Z','#2f9147',3,'#7dc78c')+P('M38 16H60L49 38Z','#d13438',3,'#f28b8e')+P('M8 46H60M8 52H50',GS,3),
P('M38 66H2V2H67V30',K,4,'#fff')+R(4,3,61,9,GR)+P('M2 14H67',K,3)+g(14,26,10,10)+g(14,44,10,10)+P(fun,K,4,'#fff'),
w_(2,2,65,64)+R(4,3,61,9,GR)+P('M2 14H67M2 32H67M2 48H67M22 14V66M44 14V66',K,3),
w_(2,2,65,64)+R(4,3,61,9,GR)+R(44,15,22,50,BL)+R(3,50,42,15,BL)+P('M2 14H67',K,3)+P('M2 32H67M2 48H67M22 14V66M44 14V66',BS,3),
tx(13,57,'R',62,34,'#2b88c8',700),
tx(-2,54,'Py',60,70,'#2b88c8',600),
ax+P('M2 16H50',BS,3.500)+C(55,15,8,BL,BS,3.500)+P('M2 34H36M2 50H20',GS,4)+C(41,34,4.500,GR,GS,3.500)+C(26,50,4.500,GR,GS,3.500),
P('M26 34H40M44 12H36V56H46M36 34H46',K,4)+b(2,26,24,16)+b(44,3,24,16)+b(44,26,24,16)+b(44,50,24,16),
P('M2 6H67V46H28L15 62V46H2Z',BS,3.500,'#fff'),
P('M9 14V2H42L60 22V67H9V40',K,3.500,'#fff')+P('M40 2V22H60Z',K,3,GR)+C(12,28,7,BL,BS,3.500)+P('M26 34H50M16 46H40','#2b93d1',4),
P('M16 8C2 6 -2 14 4 26C8 32 14 34 20 34M54 8C68 6 72 14 66 26C62 32 56 34 50 34',K,3.500)+P('M16 2H54V26C54 40 48 46 40 48V58H30V48C22 46 16 40 16 26Z',K,3.500,'#fff')+b(16,2,38,10)+b(18,58,34,9),
P('M8 -1H42L60 18V72H8Z',K,4,'#fff')+P('M40 0V20H60Z',K,3,GR)+R(16,42,9,24,K)+R(30,50,9,16,K)+R(44,34,9,32,K),
P('M10 26V60H67V12H34',K,3.500,'#fff')+tx(18,50,'123',32,46)+P('M12 54H60',GS,3)+P(zb,'#d8700f',3.500,'#fdd472'),
P('M38 70H4V40M34 4H67V30',K,4,'#fff')+R(34,6,32,8,GR)+g(14,48,10,10)+P(fun,K,4,'#fff')+P(zb,'#d8700f',3.500,'#fdd472'),
R(4,2,63,68,'#fff')+P('M30 4H42L36 16L24 32L20 42L10 50V38L4 40V68H30L36 54L46 44L56 26H67V4H30Z',BS,0,BL)+P('M30 2H67V30M4 36V70H50M20 42L28 34M20 68L34 58L38 44L52 36L58 20H66',BS,4)+P('M0 0H24V20L12 38L0 20Z','none',0,'#d8700f')+C(12,12,5,'#fff')+C(62,60,10,'#d8700f')+C(68,42,6,'#d8700f'),
P('M22 5H46L67 34L46 63H22L2 34Z','#7b3097',3.500,'#fff')+P('M28 6C22 22 26 30 36 36C26 42 22 52 36 62M50 10L28 34L52 58M36 20L50 34L34 50','#7b3097',3.500),
P('M2 4H44L67 33L44 62H2L28 33Z','#1a86e0',4,'#fff')+P('M2 4L34 40M16 62L54 18M30 62L62 28M28 33L40 20','#1a86e0',3.500)];
comp('toggle-switch',`:host{display:flex;width:40px;height:20px;border-radius:10px;align-items:center;font-size:11px;padding:0 5px;justify-content:space-between;flex:none}i{display:block;width:10px;height:10px;border-radius:5px}`,
e=>e.hasAttribute('on')?`<style>:host{background:${GREEN};color:#fff}i{background:#fff}</style>${F('On',15)}<i></i>`:`<style>:host{background:#fff;border:1px solid #605e5c;color:#605e5c}i{background:#605e5c}</style><i></i>${F('Off',16)}`);
comp('viz-pane',`:host{display:block;width:226px;background:#f3f2f1;border-left:1px solid #e1dfdd;flex:none}
.h{display:flex;align-items:center;justify-content:space-between;padding:14px 10px 0 10px;font-size:18px;font-weight:600;height:37px}
.s{font-size:14.500px;padding:11px 0 0 10px;height:35px}.m{display:flex;gap:43px;padding-left:10px;height:40px}.m div{width:40px;height:40px;border-radius:3px;display:flex;align-items:center;justify-content:center}.m .on{background:#d2d0ce}
.g{display:grid;grid-template-columns:repeat(6,23px);gap:12px;padding:14px 0 0 14px}
.el{letter-spacing:2.300px;line-height:20px;padding-left:16px;font-weight:600;margin:6px 0 20px;height:20px;font-size:16px}
.w{border-top:1px solid #dddbd9;padding:12px 6px 0 5px;font-size:14.500px}.w>*{padding-left:10px}
.box{background:#fff;border:1px dashed #b8b6b4;border-radius:2px;display:flex;align-items:center;width:213px}
.r{display:flex;align-items:center;justify-content:space-between;padding-right:21px}`,
`<div class="h">${F('Visualizations',124)}${dbl()}</div><div class="s">${F('Build visual',77)}</div>
<div class="m"><div class="on">${S(32,30,P('M1 1.500H25',K,1.200)+`<rect x="1.500" y="8" width="29" height="8.500" fill="#117865" stroke="#222" stroke-width="1.500" stroke-dasharray="2 1.500"/><rect x="1.500" y="22" width="29" height="8.500" fill="#117865" stroke="#222" stroke-width="1.500" stroke-dasharray="2 1.500"/>`)}</div>
<div>${S(30,30,P('M5 29H1V1H14L22 10V13M14 1V10H22',K,1.500)+P('M29 11C25 13 16 21 15 24L17 26C20 24 27 17 29 11ZM15 24C12 22 11 25 10 27C9 28 7 29 6 28.500C10 31 16 30 17 26',K,1.400,'#fff'))}</div></div>
<div style="padding-top:5px">${S(225,11,P('M0 10H20L29.500 1L39 10H225','#8a8886',1.100))}</div>
<div class="g">${V.map(v=>S(23,23,v,'0 0 69 69')).join('')}</div>
<div class="el">...</div>
<div class="w"><div style="height:25px;line-height:18px">${F('Values',42)}</div><div class="box" style="height:35px;padding-left:13px">${F('Add data fields here',133)}</div>
<div style="padding-top:14px;height:43px;font-weight:600;color:#484644">${F('Drill through',87)}</div>
<div class="r" style="height:24px">${F('Cross-report',83)}<toggle-switch></toggle-switch></div><div class="r" style="height:44px">${F('Keep all filters',93)}<toggle-switch on></toggle-switch></div>
<div class="box" style="height:33px;margin-top:1px">${F('Add drill-through fields here',188)}</div></div>`);
comp('data-pane',`:host{display:block;flex:1;background:#f3f2f1;border-left:1px solid #e1dfdd}
.h{display:flex;align-items:center;justify-content:space-between;padding:14px 8px 0 10px;font-size:18px;font-weight:600;height:37px}
.q{margin:20px 3px 0 5px;height:30px;background:#fff;border:1px solid #c8c6c4;border-bottom-color:#605e5c;border-radius:4px;display:flex;align-items:center;padding-left:15px;gap:8px;color:#767472;font-size:16px}
.r{display:flex;align-items:center;padding:17px 0 0 19px;height:37px;color:#484644;font-size:14.500px}`,
`<div class="h">${F('Data',41)}${dbl()}</div><div class="q">${S(18,18,C(7.500,7.500,6.700,'none','#605e5c',1.300)+P('M12.500 12.500L17.500 17.500','#605e5c',1.400))}${F('Search',51,'padding-top:2px')}</div>
<div class="r">${S(9,15,P('M1 .500L8 7.500L1 14.500','#605e5c',1.300))}<span style="margin:0 8px 0 8px">${S(15,15,'<rect x=".8" y=".8" width="13.400" height="13.400" rx="2.500" fill="none" stroke="#333" stroke-width="1.500"/>'+P('M5 1V14M10 1V14M1 5H14M1 10H14','#333',1.200))}</span>${F('SuperStore_Sales_Dat...',152)}</div>`);

/* ---------- bottom strips ---------- */
comp('page-tabs',`:host{display:flex;height:44px;background:#f3f2f1;font-size:14.500px;flex:none;align-items:stretch}
.v{display:flex;width:159px;padding:6px 0 0 13px}.v>div{height:33px}.pg{background:#fff;display:flex;align-items:center;justify-content:center;border-right:1px solid #c8c6c4;padding-top:3px}
.on{border-left:1px solid #a19f9d;border-bottom:5px solid ${GREEN};padding-top:7px;width:95px;font-weight:500}.add{width:50px;background:${GREEN};display:flex;align-items:center;justify-content:center;padding-bottom:3px}`,
`<div class="v"><div style="border-bottom:3px solid ${GREEN};width:30px;height:32px;padding:3px 0 0 2px;border-radius:1px">${S(24,18,R(.8,1,22.400,13,'none','#555',1.500)+P('M12 14V17M8 17.300H16','#555',1.400))}</div>
<div style="margin-left:31px">${S(17,26,'<rect x=".8" y=".8" width="15.400" height="24" rx="1.500" fill="none" stroke="#555" stroke-width="1.600"/>'+P('M7 21.500H10','#555',1.200))}</div>
<div style="margin-left:26px;padding-top:10px">${S(6,11,P('M6 0V11L0 5.500Z','none',0,'#bdbbb9'))}</div><div style="margin-left:22px;padding-top:10px">${S(6,11,P('M0 0V11L6 5.500Z','none',0,'#bdbbb9'))}</div></div>
<div class="pg on">${F('Page 1',44)}</div><div class="pg" style="width:96px">${F('Page 2',45)}</div><div class="add">${S(14,14,P('M7 0V14M0 7H14','#fff',4))}</div>`);
comp('status-bar',`:host{display:flex;align-items:center;height:29px;background:#f3f2f1;border-top:1px solid #e1dfdd;padding:2px 20px 0 5px;font-size:15px;color:#605e5c;flex:none}.r{display:flex;margin-left:auto;align-items:center}`,
`${F('Page 1 of 2',74)}<div class="r">${S(154,14,P('M2 6.500H8','#484644',2)+P('M14 7H139','#605e5c',1.100)+R(53,.5,5,13,'#605e5c')+P('M76.500 3.500V10.500','#605e5c',1.100)+P('M145.500 7H155M150.200 2V12','#484644',2))}<span style="width:18px"></span>${F('70%',28)}<span style="margin:0 0 0 24px">${S(21,16,R(1,1,19,14,'none','#605e5c',1.600)+P('M7 4.500H4.500V7M14 4.500H16.500V7M7 11.500H4.500V9.500M14 11.500H16.500V9.500','#605e5c',1.300))}</span></div>`);
comp('task-bar',`:host{display:flex;height:59px;background:#222;color:#fff;position:relative;padding-left:657px;font-size:14px;flex:none;border-top:1px solid #444}
.e{position:absolute;left:0;top:-2px;height:1px;width:871px;background:#000}
.i{width:55px;height:58px;display:flex;flex-direction:column;align-items:center;padding-top:15px;flex:none}.i u{display:block;width:7px;height:4px;border-radius:2px;background:#9a9a9a;margin-top:5px}
.r{margin-left:auto;display:flex;align-items:center;padding-right:22px}.c{display:flex;flex-direction:column;align-items:flex-end;gap:1px;line-height:18px}`,
()=>{const i=(c,d)=>`<div class="i">${S(32,30,c)}${d?'<u></u>':''}</div>`;
return `<div class="e"></div>`+i(R(1,1,13.500,13.500,'#4cc8f8')+R(16,1,13.500,13.500,'#3cbcf6')+R(1,16,13.500,13.500,'#2aaef4')+R(16,16,13.500,13.500,'#149df0'))
+i(C(15,14,10,'#3a3a3a','#e4e4e4',2.600)+P('M22 21L29 29','#e4e4e4',3.500))
+i(R(8,1,24,20,'#f3f3f3')+R(0,9,22,20,'rgba(110,110,110,.9)'))
+i(`<g transform="translate(1 0) scale(.86)">${copilot('t')}</g>`)
+i('<rect x="2" y="0" width="21" height="24" rx="2" fill="#f6f4f4"/>'+P('M5 16V4H16V12','#e0402e',2.500,'none','stroke-dasharray="3 2"')+P('M18 6V20M9 17H24','#bcbcbc',3)+C(28,16,3,'none','#2b9de0',2)+C(19,27,3,'none','#2b9de0',2)+P('M25 17H19V24','#2b9de0',2))
+i(P('M1 3Q1 1 3 1H11L14 5H31V12H1Z','none',0,'#e6a210')+P('M1 8H31V27Q31 29 29 29H3Q1 29 1 27Z','none',0,'#fdce44')+P('M6 29V22Q6 20 8 20H25Q27 20 27 22V29Z','none',0,'#1a7fd0'),1)
+i(C(18,6,4.500,'#7b83eb')+C(27,8,3,'#5059c9')+P('M20 12H31V20C31 24 27 25 24 24Z','none',0,'#5059c9')+P('M10 12H25V22C25 30 12 31 10 22Z','none',0,'#7b83eb')+'<rect x="1" y="9" width="16" height="16" rx="2" fill="#4b53bc"/><text x="9" y="21.500" font-size="12" font-weight="700" fill="#fff" text-anchor="middle">T</text>')
+i('<g transform="translate(1 0)">'+C(16,15,14.500,'#fdd33c')+P('M16 15L3.500 8A14.500 14.500 0 0 1 28.500 8Z','none',0,'#e33b2e')+P('M16 15L3.500 8A14.500 14.500 0 0 0 15 29.500L22 18Z','none',0,'#2ba24c')+C(16,15,7,'#fff')+C(16,15,5.500,'#1a73e8')+C(26,3,9.500,'#dfe3e0')+P('M20 -3C21 2 22 5 25 6L23 10C28 10 31 7 31 4L27 5L25 2L31 0C27 -1 24 0 23 2Z','none',0,'#2f6b4f')+'</g>',1)
+i('<g transform="translate(1 0)">'+P('M8 2H24L29 7L27 20L16 30L5 20L3 7Z','none',0,'#fb542b')+P('M16 6L23 8L22 14L19 18L20 21L16 25L12 21L13 18L10 14L9 8Z','none',0,'#fff')+P('M12 12L15 13M20 12L17 13M16 14V19M13 20H19','#fb542b',1.500)+'</g>',1)
+i('<g transform="translate(1 0)">'+P('M16 0H28V29H16Z','none',0,'#e0a00c')+P('M10 8H22V29H10Z','none',0,'#f2c02c')+P('M4 16H15V29H4Z','none',0,'#fbe05e')+'</g>',1)
+i(R(8,1,23,7,'#41a5ee')+R(8,8,23,7,'#2b7cd3')+R(8,15,23,7,'#185abd')+R(8,22,23,7,'#103f91')+'<rect x="2" y="7" width="16" height="16" rx="1.500" fill="#185abd"/><text x="10" y="19.500" font-size="12" font-weight="700" fill="#fff" text-anchor="middle" textLength="12">W</text>',1)
+`<div class="r">${S(14,10,P('M1 8.500L7 1.500L13 8.500','#fff',1.600))}<div class="c" style="align-items:center;margin-left:27px">${F('ENG',28)}${F('IN',15)}</div>
<span style="margin-left:23px">${S(20,16,P('M1 6C6 0 14 0 19 6M4 9C8 4.500 12 4.500 16 9M7 12C9 9.500 11 9.500 13 12','#fff',1.500)+C(10,14,1.600,'#fff'))}</span>
<span style="margin-left:10px">${S(19,16,P('M1 5.500H4L8 1.500V14.500L4 10.500H1ZM11 5.500C12.500 7 12.500 9 11 10.500M13.500 3.500C16 6 16 10 13.500 12.500','#fff',1.400)+P('M16 1.500C19 5 19 11 16 14.500','#888',1.300))}</span>
<span style="margin-left:10px">${S(21,18,P('M7 4H16Q18 4 18 6V14Q18 16 16 16H5Q3 16 3 14V11M20 8V12','#fff',1.500)+R(7,7,8,6.500,'#fff')+P('M5 0L0 7H4L3 11L8 4H5Z','none',0,'#fff'))}</span>
<div class="c" style="margin-left:20px">${F('18:57',36)}${F('23-09-2024',78)}</div>
<span style="margin-left:11px">${S(19,20,P('M4 14V8C4 2 13 1 15 6V14L17 16H2ZM7 18H12','#fff',1.500,'#fff')+'<text x="6" y="13" font-size="9" font-weight="700" fill="#222">z</text><text x="13" y="6" font-size="8" font-weight="700" fill="#fff">z</text>')}</span></div>`});

comp('bi-app',`:host{display:flex;flex-direction:column;width:1918px;height:1078px;background:#f3f2f1}
main{display:flex;height:791px;flex:none}.mid{display:flex;flex-direction:column;width:1417px;flex:none}.up{display:flex;height:746px}.cv{flex:1;background:#fff;padding:13px 0 0 128px}title-bar{flex:none}`,
`<title-bar></title-bar><ribbon-bar></ribbon-bar><main><nav-rail></nav-rail><div class="mid"><div class="up"><div class="cv"><report-page></report-page></div><filters-pane></filters-pane></div><page-tabs></page-tabs></div><viz-pane></viz-pane><data-pane></data-pane></main><status-bar></status-bar><task-bar></task-bar>`);
</script>
</body>
</html>
